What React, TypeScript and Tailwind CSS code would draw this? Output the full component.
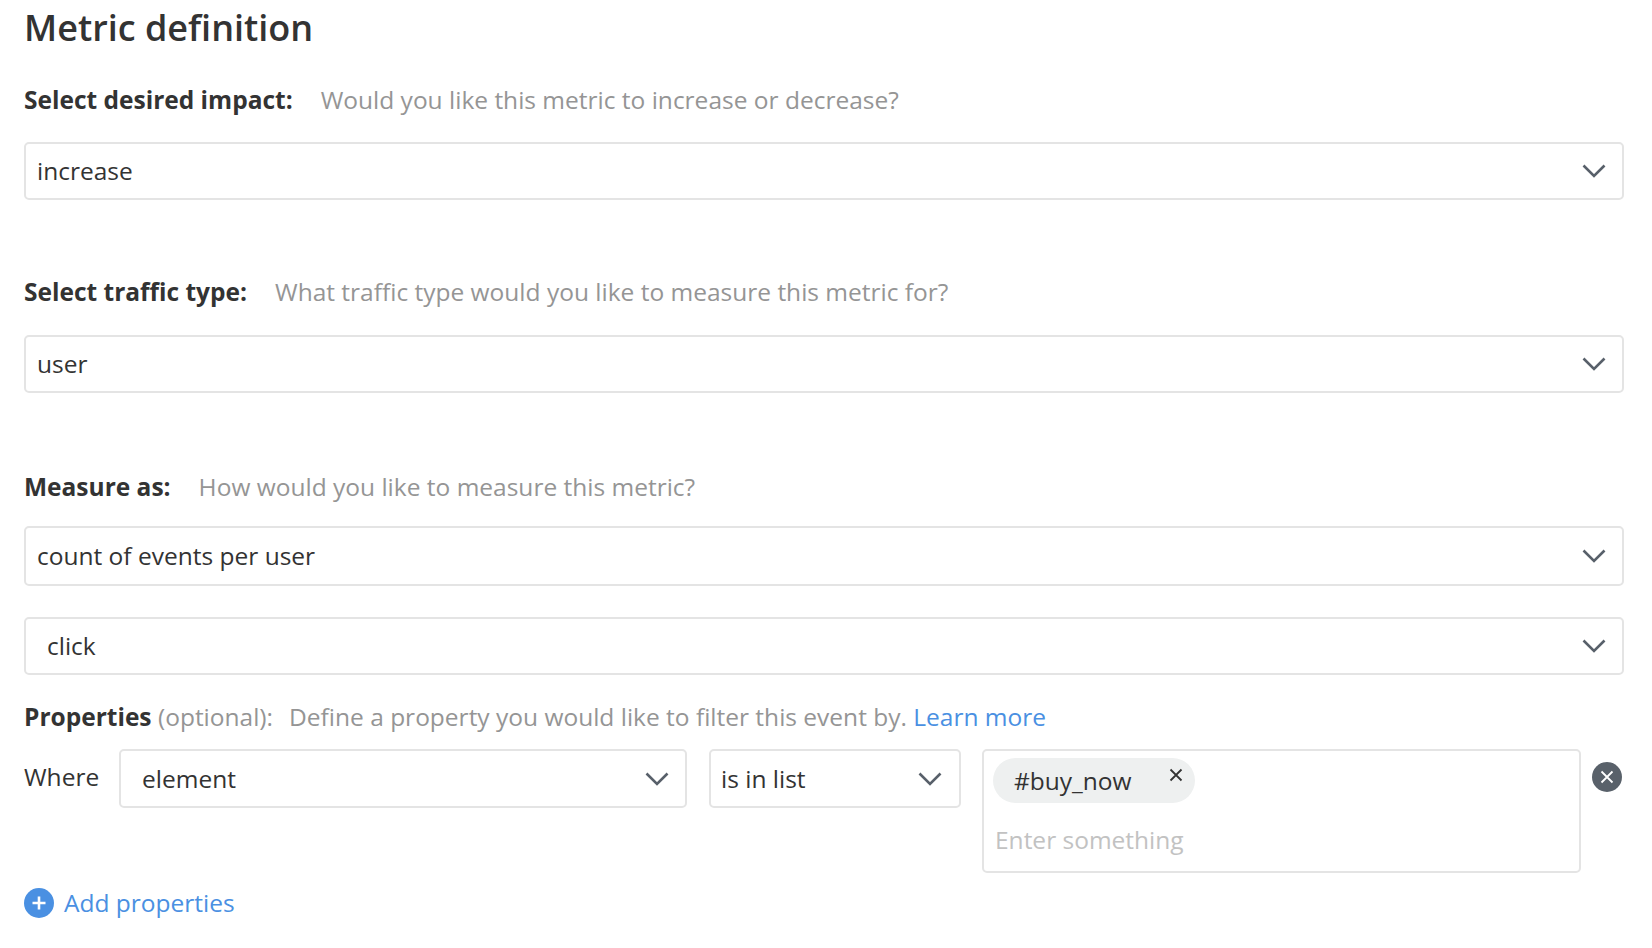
import { FC, ReactNode } from 'react'

const Chevron: FC = () => (
  <svg width="24" height="14" viewBox="0 0 24 14" fill="none" className="shrink-0">
    <polyline points="1.5,1.5 12,12 22.5,1.5" stroke="#58606a" strokeWidth="2.6" />
  </svg>
)

interface SelectProps {
  value: string
  className?: string
}

const Select: FC<SelectProps> = ({ value, className = '' }) => (
  <div
    className={`flex items-center justify-between border-2 border-[#e4e4e4] rounded-[5px] bg-white pr-[16px] ${className}`}
  >
    <span className="text-[24.5px] leading-[32px] text-[#333333]">{value}</span>
    <Chevron />
  </div>
)

const Label: FC<{ title: string; children: ReactNode; className?: string }> = ({
  title,
  children,
  className = '',
}) => (
  <div className={`text-[24.5px] leading-[32px] whitespace-nowrap ${className}`}>
    <span className="font-bold text-[#333333]">{title}</span>
    <span className="ml-[28px] text-[#959595]">{children}</span>
  </div>
)

const App: FC = () => {
  return (
    <div className="min-h-screen bg-white font-['Open_Sans',sans-serif]">
      <div className="ml-6 w-[1600px] pb-6">
        <h1 className="mt-[6px] text-[36px] leading-[44px] font-semibold text-[#333333]">
          Metric definition
        </h1>

        <Label title="Select desired impact:" className="mt-[34px]">
          Would you like this metric to increase or decrease?
        </Label>
        <Select value="increase" className="mt-[26px] h-[58px] pl-[11px]" />

        <Label title="Select traffic type:" className="mt-[76px]">
          What traffic type would you like to measure this metric for?
        </Label>
        <Select value="user" className="mt-[27px] h-[58px] pl-[11px]" />

        <Label title="Measure as:" className="mt-[78px]">
          How would you like to measure this metric?
        </Label>
        <Select value="count of events per user" className="mt-[23px] h-[60px] pl-[11px]" />
        <Select value="click" className="mt-[31px] h-[58px] pl-[21px]" />

        <div className="mt-[26px] text-[24.5px] leading-[32px] whitespace-nowrap text-[#959595]">
          <span className="font-bold text-[#333333]">Properties</span>{' '}
          <span>(optional):</span>
          <span className="ml-[16px]">Define a property you would like to filter this event by.</span>{' '}
          <a className="text-[#4a90e2]">Learn more</a>
        </div>

        <div className="mt-[16px] flex items-start">
          <div className="w-[95px] shrink-0 pt-[12px] text-[24.5px] leading-[32px] text-[#333333]">
            Where
          </div>
          <Select value="element" className="w-[568px] h-[59px] pl-[21px]" />
          <Select value="is in list" className="ml-[22px] w-[252px] h-[59px] pl-[10px] pr-[17px]" />
          <div className="ml-[21px] w-[599px] h-[124px] border-2 border-[#e4e4e4] rounded-[5px] pl-[9px] pt-[7px]">
            <div className="flex w-[202px] h-[45px] items-center justify-between rounded-full bg-[#eef0f0] pl-[21px] pr-[12px]">
              <span className="text-[24.5px] leading-[32px] text-[#333333]">#buy_now</span>
              <svg width="14" height="14" viewBox="0 0 14 14" className="-translate-y-[6px]">
                <path d="M1.5 1.5 L12.5 12.5 M12.5 1.5 L1.5 12.5" stroke="#333333" strokeWidth="1.8" />
              </svg>
            </div>
            <div className="mt-[21px] ml-[2px] text-[24.5px] leading-[32px] text-[#c2c2c2]">
              Enter something
            </div>
          </div>
          <button className="ml-[11px] mt-[13px] flex h-[30px] w-[30px] shrink-0 items-center justify-center rounded-full bg-[#59616a]">
            <svg width="14" height="14" viewBox="0 0 14 14">
              <path d="M1.5 1.5 L12.5 12.5 M12.5 1.5 L1.5 12.5" stroke="#ffffff" strokeWidth="1.8" />
            </svg>
          </button>
        </div>

        <div className="mt-[14px] flex items-center gap-[10px]">
          <span className="flex h-[30px] w-[30px] items-center justify-center rounded-full bg-[#4a90e2]">
            <svg width="16" height="16" viewBox="0 0 16 16">
              <path d="M8 1.5 V14.5 M1.5 8 H14.5" stroke="#ffffff" strokeWidth="2.6" />
            </svg>
          </span>
          <span className="text-[24.5px] leading-[32px] text-[#4a90e2]">Add properties</span>
        </div>
      </div>
    </div>
  )
}

export default App
